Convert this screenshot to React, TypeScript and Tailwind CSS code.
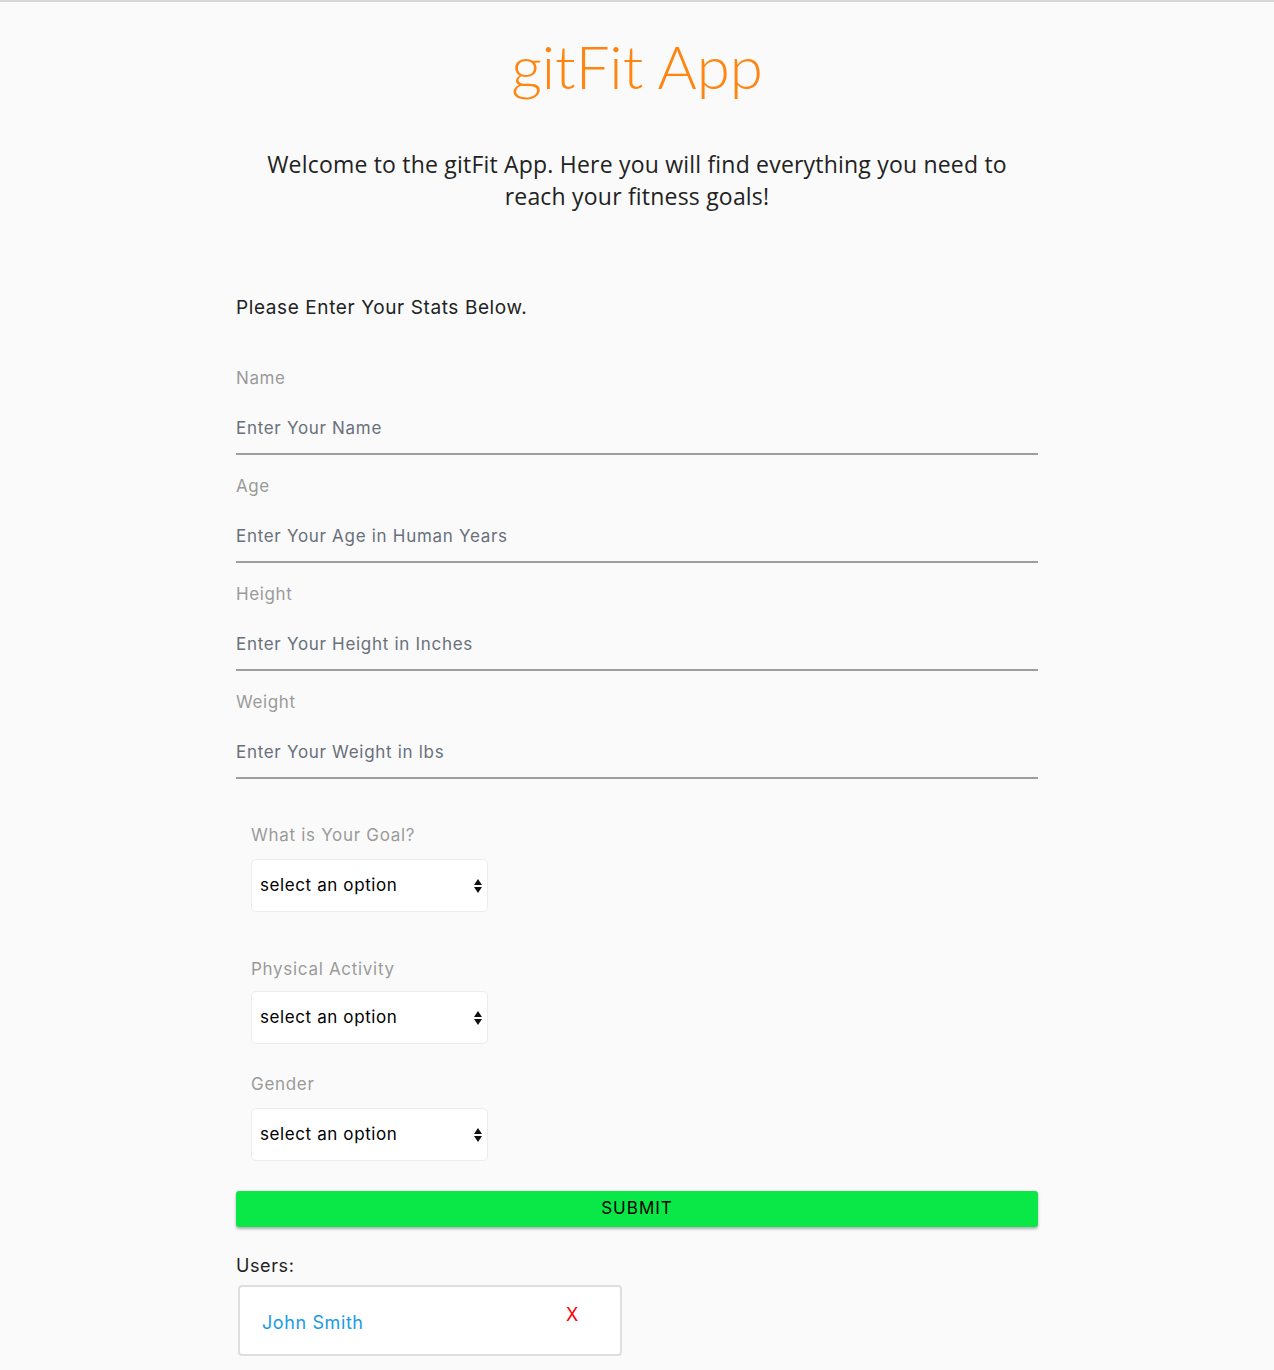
import React from "react";

const Arrows = () => (
  <svg width="8" height="16" viewBox="0 0 8 16" className="absolute right-[5px] top-1/2 -translate-y-1/2">
    <path d="M4 1 L8 7 L0 7 Z" fill="#111" />
    <path d="M0 9 L8 9 L4 15 Z" fill="#111" />
  </svg>
);

const Field = ({ label, placeholder }: { label: string; placeholder: string }) => (
  <div className="flex flex-col">
    <label className="mt-[20px] text-[17px] text-[#9a9a9a] tracking-[0.6px] h-[22px] leading-[22px]">{label}</label>
    <input
      className="mt-[14px] h-[52px] border-b-2 border-[#9e9e9e] bg-transparent outline-none text-[17px] tracking-[0.7px] text-[#6b7280] placeholder:text-[#69707a]"
      placeholder={placeholder}
    />
  </div>
);

const Select = ({ label, mt, gap }: { label: string; mt: string; gap: string }) => (
  <div className={`flex flex-col pl-[15px] ${mt}`}>
    <label className="text-[17px] text-[#9a9a9a] tracking-[0.7px] leading-[22px]">{label}</label>
    <div className={`relative ${gap} w-[237px] h-[53px] bg-white border border-[#ececec] rounded-[5px] flex items-center pl-[8px]`}>
      <span className="text-[17px] text-black tracking-[0.6px]">select an option</span>
      <Arrows />
    </div>
  </div>
);

export default function App() {
  return (
    <div className="min-h-[1370px] bg-[#fafafa] border-t-2 border-[#d6d6d6]" style={{ fontFamily: "Inter, 'Noto Sans', sans-serif" }}>
      <div className="flex flex-col items-center">
        <h1
          className="mt-[26px] text-[60px] leading-[76px] text-[#ff8410]"
          style={{ fontFamily: "Lato, 'Noto Sans', sans-serif", fontWeight: 300 }}
        >
          gitFit App
        </h1>
        <p
          className="mt-[44px] w-[780px] text-center text-[23px] leading-[32px] text-[#222] tracking-[0.2px]"
          style={{ fontFamily: "'Open Sans', sans-serif", fontWeight: 400 }}
        >
          Welcome to the gitFit App. Here you will find everything you need to reach your fitness goals!
        </p>
      </div>
      <div className="w-[802px] mx-auto mt-[84px]">
        <div className="text-[19px] text-[#222] tracking-[0.6px] leading-[24px]">Please Enter Your Stats Below.</div>
        <div className="mt-[27px]">
          <Field label="Name" placeholder="Enter Your Name" />
          <Field label="Age" placeholder="Enter Your Age in Human Years" />
          <Field label="Height" placeholder="Enter Your Height in Inches" />
          <Field label="Weight" placeholder="Enter Your Weight in lbs" />
        </div>
        <Select label="What is Your Goal?" mt="mt-[45px]" gap="mt-[13px]" />
        <Select label="Physical Activity" mt="mt-[46px]" gap="mt-[11px]" />
        <Select label="Gender" mt="mt-[29px]" gap="mt-[13px]" />
        <button className="mt-[30px] w-full h-[36px] bg-[#0ae847] rounded-[3px] shadow-[0_2px_3px_rgba(0,0,0,0.3)] text-[17px] tracking-[1px] text-black">
          SUBMIT
        </button>
        <div className="mt-[27px] text-[18px] text-[#222] tracking-[0.6px] leading-[24px]">Users:</div>
        <div className="mt-[7px] ml-[2px] w-[384px] h-[71px] bg-white border-2 border-[#dedede] rounded-[4px] relative">
          <span className="absolute left-[22px] top-[22px] text-[18px] text-[#1a9ae6] tracking-[0.6px]">John Smith</span>
          <span className="absolute left-[326px] top-[14px] text-[18px] text-[#ff0000]">X</span>
        </div>
      </div>
    </div>
  );
}
